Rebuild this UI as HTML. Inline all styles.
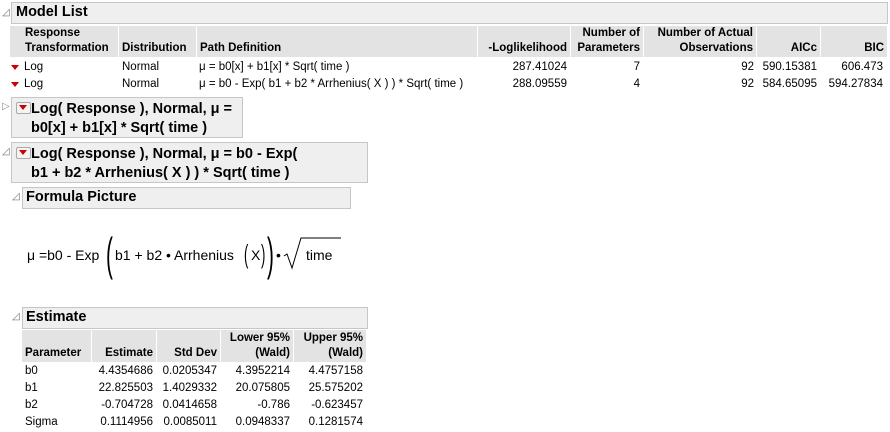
<!DOCTYPE html>
<html><head><style>
body{margin:0;width:890px;height:432px;background:#fff;font-family:"Liberation Sans",sans-serif;color:#000;position:relative;overflow:hidden}
.a{position:absolute}
.hd{position:absolute;background:#efefef;border:1px solid #c6c6c6;font-weight:bold;font-size:14.5px;box-sizing:border-box}
.tri{position:absolute;font-size:10px;color:#777}
.th{position:absolute;background:#e3e3e3;font-weight:bold;font-size:11.5px;box-sizing:border-box;padding:0 3px;display:flex;align-items:flex-end;line-height:15px;padding-bottom:1px}
.r{justify-content:flex-end;text-align:right}
.c{position:absolute;font-size:11.5px;line-height:17px;white-space:nowrap}
.rt{text-align:right}
.dd{position:absolute;width:0;height:0;border-left:4px solid transparent;border-right:4px solid transparent;border-top:5px solid #c00}
.btn{position:absolute;width:13px;height:10px;border:1px solid #aaa;background:#f4f4f4;border-radius:2px}
.btn:after{content:"";position:absolute;left:2px;top:2px;border-left:4.5px solid transparent;border-right:4.5px solid transparent;border-top:5px solid #c00}
</style></head><body>
<div class="tri" style="left:2px;top:7px">◿</div>
<div class="hd" style="left:11px;top:2px;width:877px;height:22px;padding:1px 4px">Model List</div>
<div class="th" style="left:10px;top:26px;width:12px;height:31px"></div>
<div class="th" style="left:22px;top:26px;width:96px;height:31px">Response<br>Transformation</div>
<div class="th" style="left:119px;top:26px;width:77px;height:31px">Distribution</div>
<div class="th" style="left:197px;top:26px;width:280px;height:31px">Path Definition</div>
<div class="th r" style="left:478px;top:26px;width:92px;height:31px">-Loglikelihood</div>
<div class="th r" style="left:571px;top:26px;width:72px;height:31px">Number of<br>Parameters</div>
<div class="th r" style="left:644px;top:26px;width:112px;height:31px">Number of Actual<br>Observations</div>
<div class="th r" style="left:757px;top:26px;width:63px;height:31px">AICc</div>
<div class="th r" style="left:821px;top:26px;width:66px;height:31px">BIC</div>
<div class="dd" style="left:11px;top:65px"></div><div class="dd" style="left:11px;top:82px"></div>
<div class="c" style="left:24px;top:59px">Log<br>Log</div>
<div class="c" style="left:122px;top:59px">Normal<br>Normal</div>
<div class="c" style="left:199px;top:59px">μ = b0[x] + b1[x] * Sqrt( time )<br>μ = b0 - Exp( b1 + b2 * Arrhenius( X ) ) * Sqrt( time )</div>
<div class="c rt" style="left:478px;top:59px;width:89px">287.41024<br>288.09559</div>
<div class="c rt" style="left:571px;top:59px;width:69px">7<br>4</div>
<div class="c rt" style="left:644px;top:59px;width:110px">92<br>92</div>
<div class="c rt" style="left:757px;top:59px;width:60px">590.15381<br>584.65095</div>
<div class="c rt" style="left:821px;top:59px;width:62px">606.473<br>594.27834</div>

<div class="tri" style="left:2px;top:101px;color:#888">▷</div>
<div class="hd" style="left:11px;top:97px;width:232px;height:41px;padding:2px 0 0 19px;line-height:19px">Log( Response ), Normal, μ =<br>b0[x] + b1[x] * Sqrt( time )</div>
<div class="btn" style="left:16px;top:102px"></div>
<div class="tri" style="left:2px;top:146px">◿</div>
<div class="hd" style="left:11px;top:142px;width:357px;height:41px;padding:2px 0 0 19px;line-height:19px">Log( Response ), Normal, μ = b0 - Exp(<br>b1 + b2 * Arrhenius( X ) ) * Sqrt( time )</div>
<div class="btn" style="left:16px;top:147px"></div>

<div class="tri" style="left:12px;top:191px">◿</div>
<div class="hd" style="left:22px;top:187px;width:329px;height:22px;padding:1px 3px">Formula Picture</div>
<div class="a" style="left:22px;top:209px;width:326px;height:91px;background:#fff;font-size:14px">
<div class="a" style="left:5px;top:38px;white-space:nowrap">μ =b0 - Exp</div>
<div class="a" style="left:84px;top:18px;font-size:46px;transform:scaleX(0.45);transform-origin:left">(</div>
<div class="a" style="left:93px;top:38px;white-space:nowrap">b1 + b2 • Arrhenius</div>
<div class="a" style="left:222px;top:30px;font-size:26px;transform:scaleX(0.5);transform-origin:left">(</div>
<div class="a" style="left:229px;top:38px">X</div>
<div class="a" style="left:239px;top:30px;font-size:26px;transform:scaleX(0.5);transform-origin:left">)</div>
<div class="a" style="left:245px;top:18px;font-size:46px;transform:scaleX(0.45);transform-origin:left">)</div>
<div class="a" style="left:254px;top:38px">•</div>
<svg class="a" style="left:261px;top:27px" width="60" height="34"><path d="M1 20 L4 18 L9 32 L18 2 L58 2" fill="none" stroke="#000" stroke-width="1"/></svg>
<div class="a" style="left:284px;top:38px">time</div>
</div>

<div class="tri" style="left:12px;top:311px">◿</div>
<div class="hd" style="left:22px;top:307px;width:346px;height:22px;padding:1px 3px">Estimate</div>
<div class="th" style="left:22px;top:330px;width:69px;height:32px">Parameter</div>
<div class="th r" style="left:92px;top:330px;width:64px;height:32px">Estimate</div>
<div class="th r" style="left:157px;top:330px;width:63px;height:32px">Std Dev</div>
<div class="th r" style="left:221px;top:330px;width:72px;height:32px">Lower 95%<br>(Wald)</div>
<div class="th r" style="left:294px;top:330px;width:72px;height:32px">Upper 95%<br>(Wald)</div>
<div class="c" style="left:25px;top:363px">b0<br>b1<br>b2<br>Sigma</div>
<div class="c rt" style="left:92px;top:363px;width:61px">4.4354686<br>22.825503<br>-0.704728<br>0.1114956</div>
<div class="c rt" style="left:157px;top:363px;width:60px">0.0205347<br>1.4029332<br>0.0414658<br>0.0085011</div>
<div class="c rt" style="left:221px;top:363px;width:69px">4.3952214<br>20.075805<br>-0.786<br>0.0948337</div>
<div class="c rt" style="left:294px;top:363px;width:69px">4.4757158<br>25.575202<br>-0.623457<br>0.1281574</div>
</body></html>
